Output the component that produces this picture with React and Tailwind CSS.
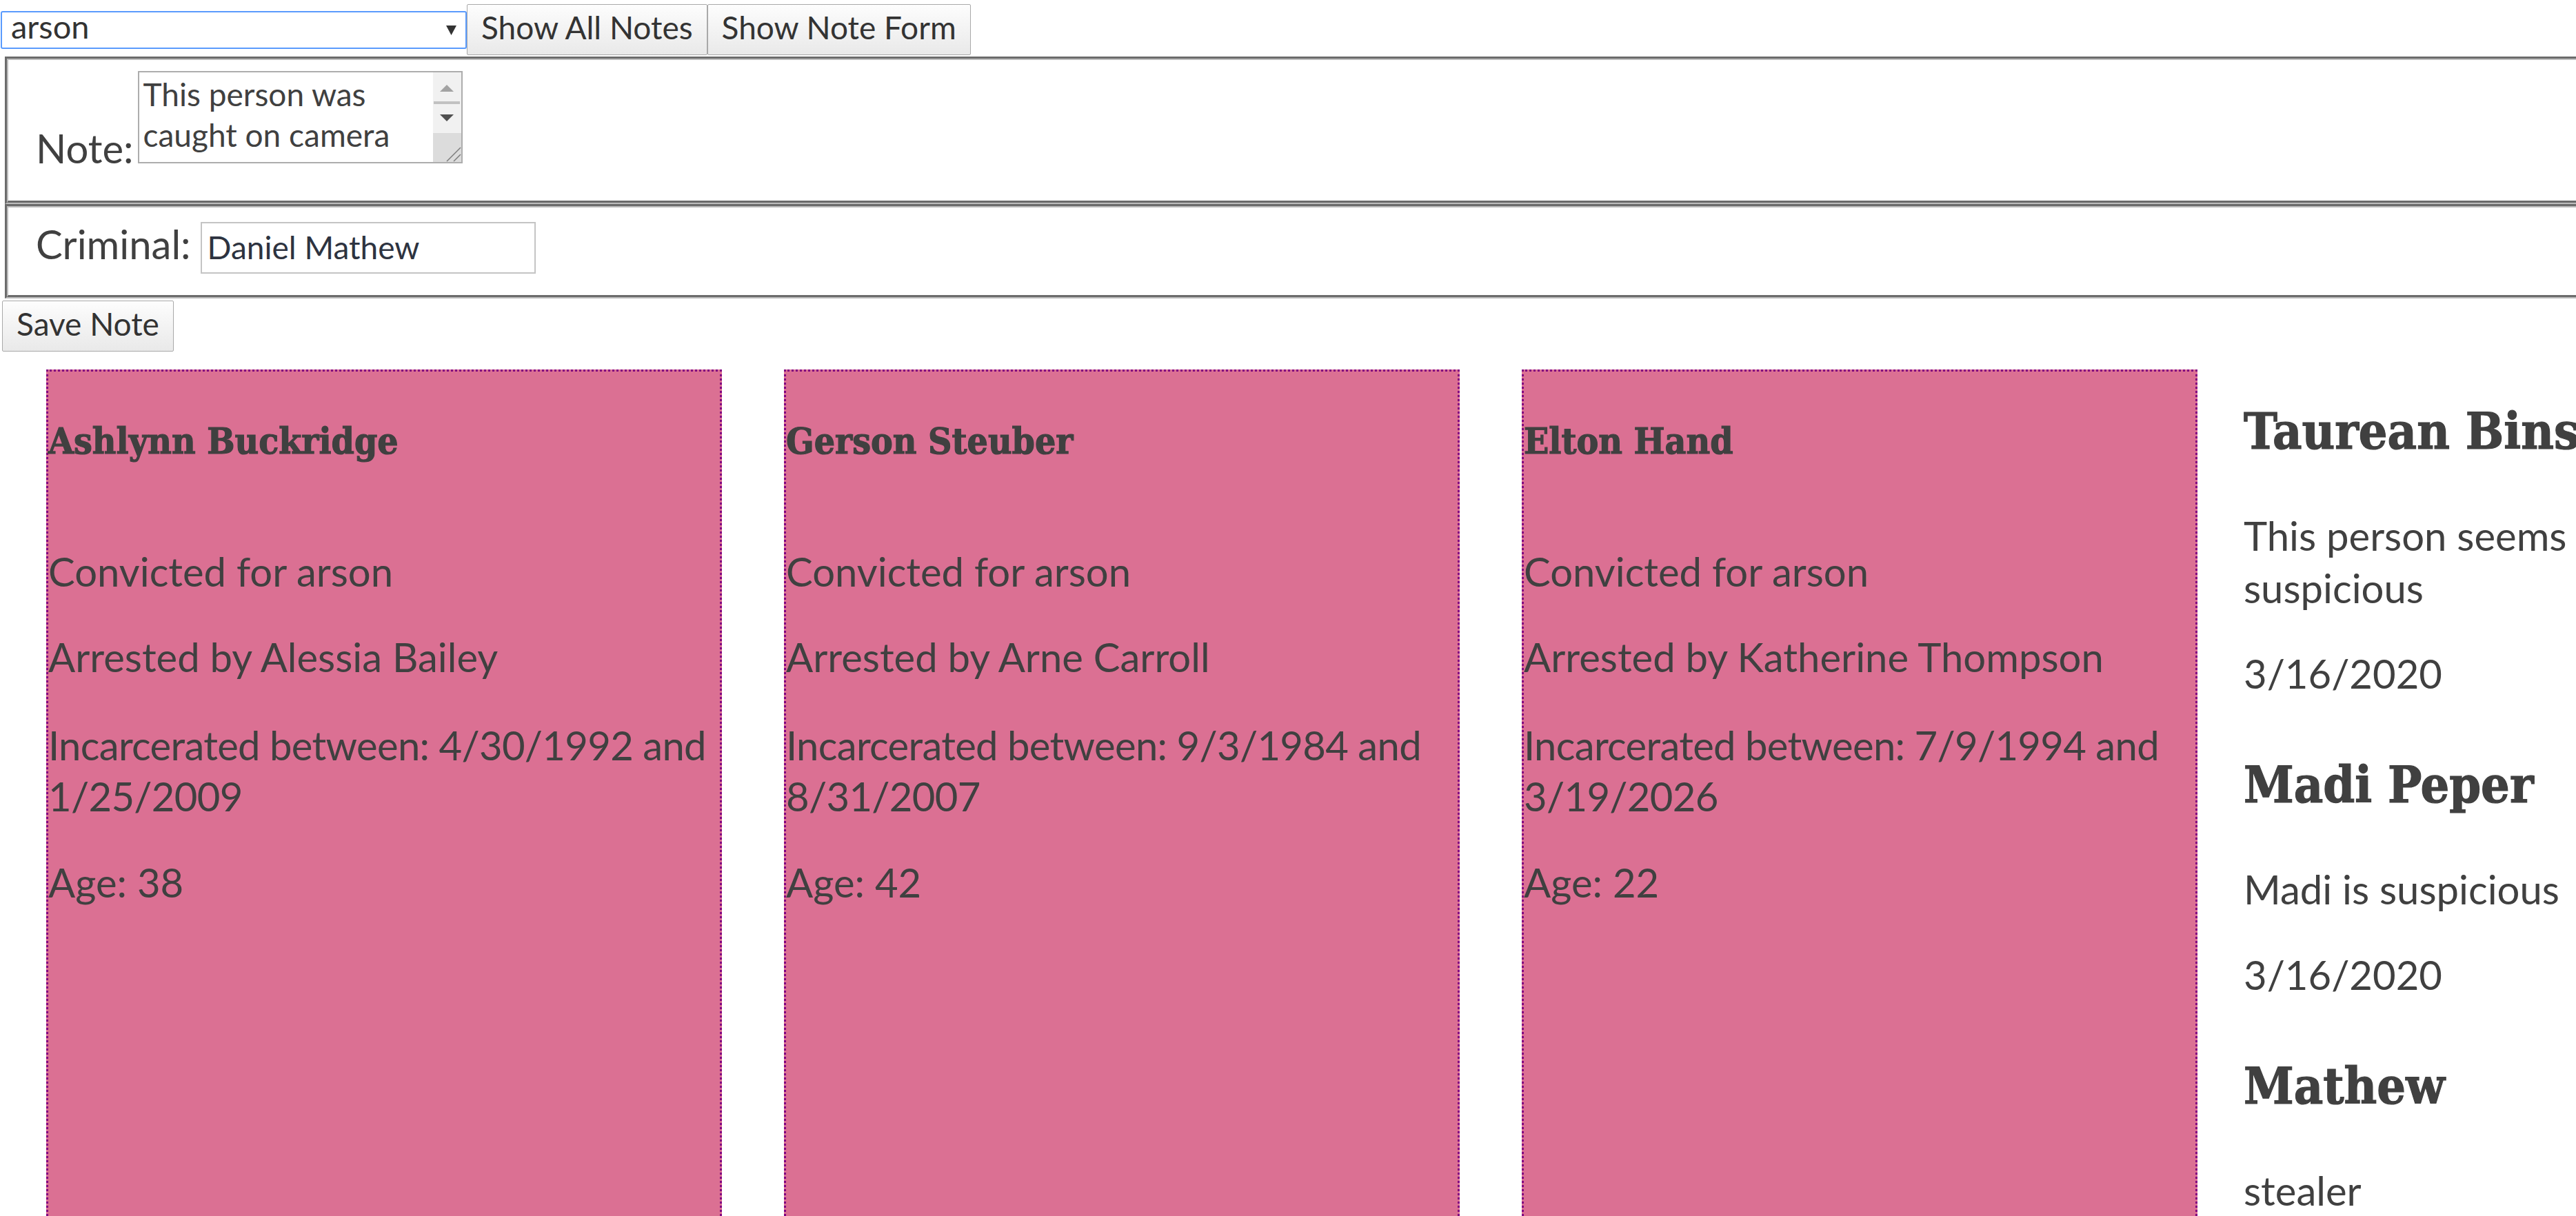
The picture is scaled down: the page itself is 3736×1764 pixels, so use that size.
import React from 'react';

const slab = "font-['DejaVu_Serif_Condensed','DejaVu_Serif',serif] font-stretch-condensed font-bold [-webkit-text-stroke:1.2px_#404040]";

const criminals = [
  { name: 'Ashlynn Buckridge', crime: 'arson', officer: 'Alessia Bailey', from: '4/30/1992', to: '1/25/2009', age: 38 },
  { name: 'Gerson Steuber', crime: 'arson', officer: 'Arne Carroll', from: '9/3/1984', to: '8/31/2007', age: 42 },
  { name: 'Elton Hand', crime: 'arson', officer: 'Katherine Thompson', from: '7/9/1994', to: '3/19/2026', age: 22 },
];

const notes = [
  { suspect: 'Taurean Bins', text: 'This person seems suspicious', date: '3/16/2020' },
  { suspect: 'Madi Peper', text: 'Madi is suspicious', date: '3/16/2020' },
  { suspect: 'Mathew', text: 'stealer', date: '3/16/2020' },
];

// groove border like a default fieldset
function Groove({ children }) {
  return (
    <div className="mx-[7px] border-t-[3px] border-l-[3px] border-b-[2px] border-r-[2px] border-t-[#6b6b6b] border-l-[#6b6b6b] border-b-[#bdbdbd] border-r-[#bdbdbd]">
      <div className="border-t-[2px] border-l-[2px] border-b-[3px] border-r-[3px] border-t-[#bdbdbd] border-l-[#bdbdbd] border-b-[#6b6b6b] border-r-[#6b6b6b]">
        {children}
      </div>
    </div>
  );
}

function Btn({ children, className = '' }) {
  return (
    <button className={`block h-[74px] px-[20px] pb-[6px] border border-[#a9a9a9] rounded-[2px] bg-linear-to-b from-[#fdfdfd] to-[#e9e9e9] text-[46px] leading-none text-[#333] whitespace-nowrap ${className}`}>
      {children}
    </button>
  );
}

function FakeTextarea() {
  return (
    <div className="ml-[6px] w-[471px] h-[134px] border-2 border-[#adadad] bg-white flex">
      <div className="flex-1 pl-[6px] pt-[2px] text-[46px] leading-[59px] text-[#404040] overflow-hidden">
        This person was caught on camera
      </div>
      <div className="w-[41px] flex flex-col">
        <div className="h-[88px] bg-[#f1f1f1] flex flex-col items-center">
          <svg className="mt-[18px]" width="20" height="10" viewBox="0 0 20 10">
            <path d="M10 0L20 10H0Z" fill="#a3a3a3" />
          </svg>
          <div className="mt-[14px] h-[4px] w-[38px] bg-[#c1c1c1]" />
          <div className="mt-[15px]">
            <svg width="20" height="10" viewBox="0 0 20 10">
              <path d="M0 0H20L10 10Z" fill="#505050" />
            </svg>
          </div>
        </div>
        <div className="flex-1 bg-[#dcdcdc]">
          <svg width="41" height="42" viewBox="0 0 41 42">
            <path d="M20 41L40 21M30 41L40 31" stroke="#7d7d7d" strokeWidth="1.5" />
          </svg>
        </div>
      </div>
    </div>
  );
}

function CriminalCard({ c }) {
  return (
    <div className="w-[980px] h-[1300px] shrink-0 bg-[#db7093] border-[3px] border-dotted border-[#800080]">
      <h3 className={`${slab} text-[53px] leading-[60px] mt-[70px]`}>{c.name}</h3>
      <p className="mt-[122px]">Convicted for {c.crime}</p>
      <p className="mt-[48px]">Arrested by {c.officer}</p>
      <p className="mt-[53px] tracking-[-0.7px] leading-[74px]">Incarcerated between: {c.from} and {c.to}</p>
      <p className="mt-[50px]">Age: {c.age}</p>
    </div>
  );
}

export default function App() {
  return (
    <div className="w-[3736px] h-[1764px] overflow-hidden bg-white text-[#404040] font-['Lato','Liberation_Sans',sans-serif] text-[58px] leading-[76px]">
      <div className="w-[4300px]">
        {/* top controls */}
        <div className="flex items-start">
          <div className="mt-[16px] ml-[1px] w-[676px] h-[55px] border-2 border-[#5a9bfd] rounded-[3px] flex items-center pl-[13px] pr-[13px] bg-white">
            <span className="flex-1 text-[47px] leading-[47px] mb-[10px] text-[#333]">arson</span>
            <svg width="15" height="14" viewBox="0 0 15 14">
              <path d="M0 0H15L7.5 14Z" fill="#333" />
            </svg>
          </div>
          <Btn className="mt-[6px]">Show All Notes</Btn>
          <Btn className="mt-[6px]">Show Note Form</Btn>
        </div>

        {/* note form */}
        <div className="mt-[2px]">
          <Groove>
            <div className="flex items-end pl-[40px] pt-[16px] pb-[54px]">
              <span className="-mb-[16px]">Note:</span>
              <FakeTextarea />
            </div>
          </Groove>
          <Groove>
            <div className="flex items-baseline pl-[40px] pt-[15px] pb-[31px]">
              <span>Criminal:</span>
              <input
                defaultValue="Daniel Mathew"
                className="ml-[14px] w-[486px] h-[75px] border-2 border-[#c4c4c4] px-[8px] text-[46px] text-[#2d3340] bg-white"
              />
            </div>
          </Groove>
          <Btn className="mt-[3px] ml-[3px]">Save Note</Btn>
        </div>

        {/* results */}
        <div className="mt-[26px] flex items-start pl-[67px] gap-[67px]">
          <div className="flex gap-[90px]">
            {criminals.map((c) => (
              <CriminalCard key={c.name} c={c} />
            ))}
          </div>
          <div className="w-[600px] shrink-0">
            {notes.map((n, i) => (
              <div key={n.suspect}>
                <h2 className={`${slab} text-[73px] leading-[84px] ${i === 0 ? 'mt-[47px]' : 'mt-[81px]'}`}>{n.suspect}</h2>
                <p className="mt-[72px]">{n.text}</p>
                <p className="mt-[48px]">{n.date}</p>
              </div>
            ))}
          </div>
        </div>
      </div>
    </div>
  );
}
